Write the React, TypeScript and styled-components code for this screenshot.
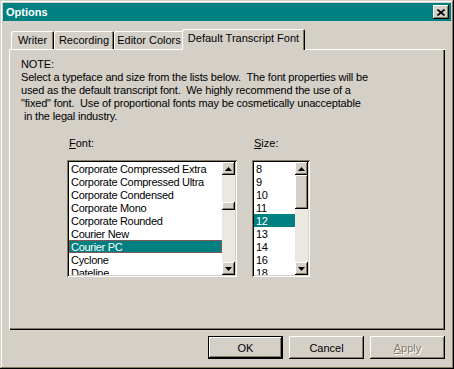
import React from 'react';
import styled, { createGlobalStyle, css } from 'styled-components';

const FACE = '#d4d0c8';
const SHADOW = '#857a64';
const DARK = '#000000';
const LIGHT = '#ffffff';
const TEAL = '#008080';
const TRACK = '#ebe8e2';

const GlobalStyle = createGlobalStyle`
  html, body { margin: 0; padding: 0; background: ${FACE}; }
  body { font-family: "Liberation Sans", Arial, sans-serif; font-size: 11px; color: #000; }
  * { box-sizing: border-box; }
`;

const raised = css`
  box-shadow: inset -1px -1px ${DARK}, inset 1px 1px ${LIGHT}, inset -2px -2px ${SHADOW}, inset 2px 2px ${FACE};
`;

const Window = styled.div`
  width: 454px;
  height: 369px;
  padding: 3px;
  background: ${FACE};
  display: flex;
  flex-direction: column;
  box-shadow: inset -1px -1px ${DARK}, inset 1px 1px ${FACE}, inset -2px -2px ${SHADOW}, inset 2px 2px ${LIGHT};
`;

const TitleBar = styled.div`
  height: 18px;
  background: ${TEAL};
  display: flex;
  align-items: center;
  justify-content: space-between;
  padding: 0 2px 0 3px;
`;

const Title = styled.span`
  color: #fff;
  font-weight: bold;
  font-size: 11px;
  line-height: 18px;
`;

const CloseButton = styled.div`
  width: 16px;
  height: 14px;
  background: ${FACE};
  ${raised};
  display: flex;
  align-items: center;
  justify-content: center;
  padding-right: 1px;
`;

const Body = styled.div`
  padding: 8px 6px 0 6px;
  display: flex;
  flex-direction: column;
`;

const TabStrip = styled.div`
  height: 20px;
  padding-left: 2px;
  display: flex;
  align-items: flex-end;
  position: relative;
  z-index: 1;
`;

const Tab = styled.div<{ $w: number; $active?: boolean }>`
  width: ${(p) => p.$w + (p.$active ? 4 : 0)}px;
  height: ${(p) => (p.$active ? 21 : 18)}px;
  margin: ${(p) => (p.$active ? '0 -2px -1px -2px' : '0')};
  position: relative;
  z-index: ${(p) => (p.$active ? 2 : 1)};
  background: ${FACE};
  border-radius: 2px 2px 0 0;
  box-shadow: inset 1px 1px ${LIGHT}, inset -1px 0 ${DARK}, inset -2px 0 ${SHADOW};
  text-align: center;
  line-height: ${(p) => (p.$active ? 17 : 18)}px;
  padding-top: ${(p) => (p.$active ? 1 : 0)}px;
  white-space: nowrap;
`;

const Panel = styled.div`
  height: 281px;
  background: ${FACE};
  box-shadow: inset 1px 1px ${LIGHT}, inset -1px -1px ${DARK}, inset -2px -2px ${SHADOW};
  padding: 9px 12px 0 12px;
`;

const Note = styled.div`
  line-height: 13px;
  letter-spacing: -0.17px;
`;

const NoteLine = styled.div`
  white-space: pre;
`;

const ListsRow = styled.div`
  display: flex;
  gap: 15px;
  margin-top: 14px;
  padding-left: 46px;
`;

const Column = styled.div`
  display: flex;
  flex-direction: column;
`;

const Label = styled.div`
  line-height: 13px;
  padding-left: 2px;
  margin-bottom: 10px;
  u { text-decoration: underline; }
`;

const ListBox = styled.div<{ $w: number }>`
  width: ${(p) => p.$w}px;
  height: 117px;
  background: #fff;
  padding: 2px;
  display: flex;
  box-shadow: inset 1px 1px ${SHADOW}, inset -1px -1px ${LIGHT}, inset 2px 2px ${DARK}, inset -2px -2px ${FACE};
`;

const Items = styled.div`
  flex: 1;
  overflow: hidden;
`;

const Item = styled.div<{ $sel?: boolean; $focus?: boolean }>`
  height: 13px;
  line-height: 14px;
  padding-left: 2px;
  white-space: nowrap;
  font-size: 11px;
  letter-spacing: -0.3px;
  background: ${(p) => (p.$sel ? TEAL : 'transparent')};
  color: ${(p) => (p.$sel ? '#fff' : '#000')};
  outline: ${(p) => (p.$focus ? '1px dotted #ff3030' : 'none')};
  outline-offset: -1px;
`;

const ScrollBar = styled.div`
  width: 13px;
  display: flex;
  flex-direction: column;
  background: ${TRACK};
`;

const ArrowButton = styled.div`
  width: 13px;
  height: 13px;
  flex: none;
  background: ${FACE};
  ${raised};
  display: flex;
  align-items: center;
  justify-content: center;
`;

const Thumb = styled.div<{ $top: number; $h: number }>`
  width: 13px;
  height: ${(p) => p.$h}px;
  margin-top: ${(p) => p.$top}px;
  background: ${FACE};
  ${raised};
`;

const Spacer = styled.div`
  flex: 1;
`;

const Footer = styled.div`
  display: flex;
  justify-content: flex-end;
  gap: 6px;
  margin-top: 6px;
`;

const Button = styled.div<{ $default?: boolean; $disabled?: boolean }>`
  width: 75px;
  height: 23px;
  background: ${FACE};
  display: flex;
  align-items: center;
  justify-content: center;
  ${(p) =>
    p.$default
      ? css`box-shadow: inset 0 0 0 1px #000, inset -2px -2px ${DARK}, inset 2px 2px ${LIGHT}, inset -3px -3px ${SHADOW};`
      : raised}
  color: ${(p) => (p.$disabled ? SHADOW : '#000')};
  text-shadow: ${(p) => (p.$disabled ? `1px 1px ${LIGHT}` : 'none')};
  u { text-decoration: underline; }
`;

const Arrow = ({ down }: { down?: boolean }) => (
  <svg width="7" height="4" viewBox="0 0 7 4">
    <polygon points={down ? '0,0 7,0 3.5,4' : '3.5,0 7,4 0,4'} fill="#000" />
  </svg>
);

const CloseGlyph = () => (
  <svg width="8" height="7" viewBox="0 0 8 7">
    <path d="M0.5 0.5 L7.5 6.5 M7.5 0.5 L0.5 6.5" stroke="#000" strokeWidth="1.6" />
  </svg>
);

const fonts = [
  'Corporate Compressed Extra',
  'Corporate Compressed Ultra',
  'Corporate Condensed',
  'Corporate Mono',
  'Corporate Rounded',
  'Courier New',
  'Courier PC',
  'Cyclone',
  'Dateline',
];
const sizes = ['8', '9', '10', '11', '12', '13', '14', '16', '18'];

const List = ({
  items,
  selected,
  focus,
  width,
  thumbTop,
  thumbH,
}: {
  items: string[];
  selected: number;
  focus?: boolean;
  width: number;
  thumbTop: number;
  thumbH: number;
}) => (
  <ListBox $w={width}>
    <Items>
      {items.map((t, i) => (
        <Item key={t} $sel={i === selected} $focus={focus && i === selected}>
          {t}
        </Item>
      ))}
    </Items>
    <ScrollBar>
      <ArrowButton>
        <Arrow />
      </ArrowButton>
      <Thumb $top={thumbTop} $h={thumbH} />
      <Spacer />
      <ArrowButton>
        <Arrow down />
      </ArrowButton>
    </ScrollBar>
  </ListBox>
);

export default function App() {
  return (
    <>
      <GlobalStyle />
      <Window>
        <TitleBar>
          <Title>Options</Title>
          <CloseButton>
            <CloseGlyph />
          </CloseButton>
        </TitleBar>
        <Body>
          <TabStrip>
            <Tab $w={43}>Writer</Tab>
            <Tab $w={60}>Recording</Tab>
            <Tab $w={70}>Editor Colors</Tab>
            <Tab $w={119} $active>
              Default Transcript Font
            </Tab>
          </TabStrip>
          <Panel>
            <Note>
              <NoteLine>NOTE:</NoteLine>
              <NoteLine>Select a typeface and size from the lists below.  The font properties will be</NoteLine>
              <NoteLine>used as the default transcript font.  We highly recommend the use of a</NoteLine>
              <NoteLine>"fixed" font.  Use of proportional fonts may be cosmetically unacceptable</NoteLine>
              <NoteLine> in the legal industry.</NoteLine>
            </Note>
            <ListsRow>
              <Column>
                <Label>
                  <u>F</u>ont:
                </Label>
                <List items={fonts} selected={6} focus width={170} thumbTop={27} thumbH={8} />
              </Column>
              <Column>
                <Label>
                  <u>S</u>ize:
                </Label>
                <List items={sizes} selected={4} width={58} thumbTop={0} thumbH={34} />
              </Column>
            </ListsRow>
          </Panel>
          <Footer>
            <Button $default>OK</Button>
            <Button>Cancel</Button>
            <Button $disabled>
              <span>
                <u>A</u>pply
              </span>
            </Button>
          </Footer>
        </Body>
      </Window>
    </>
  );
}
